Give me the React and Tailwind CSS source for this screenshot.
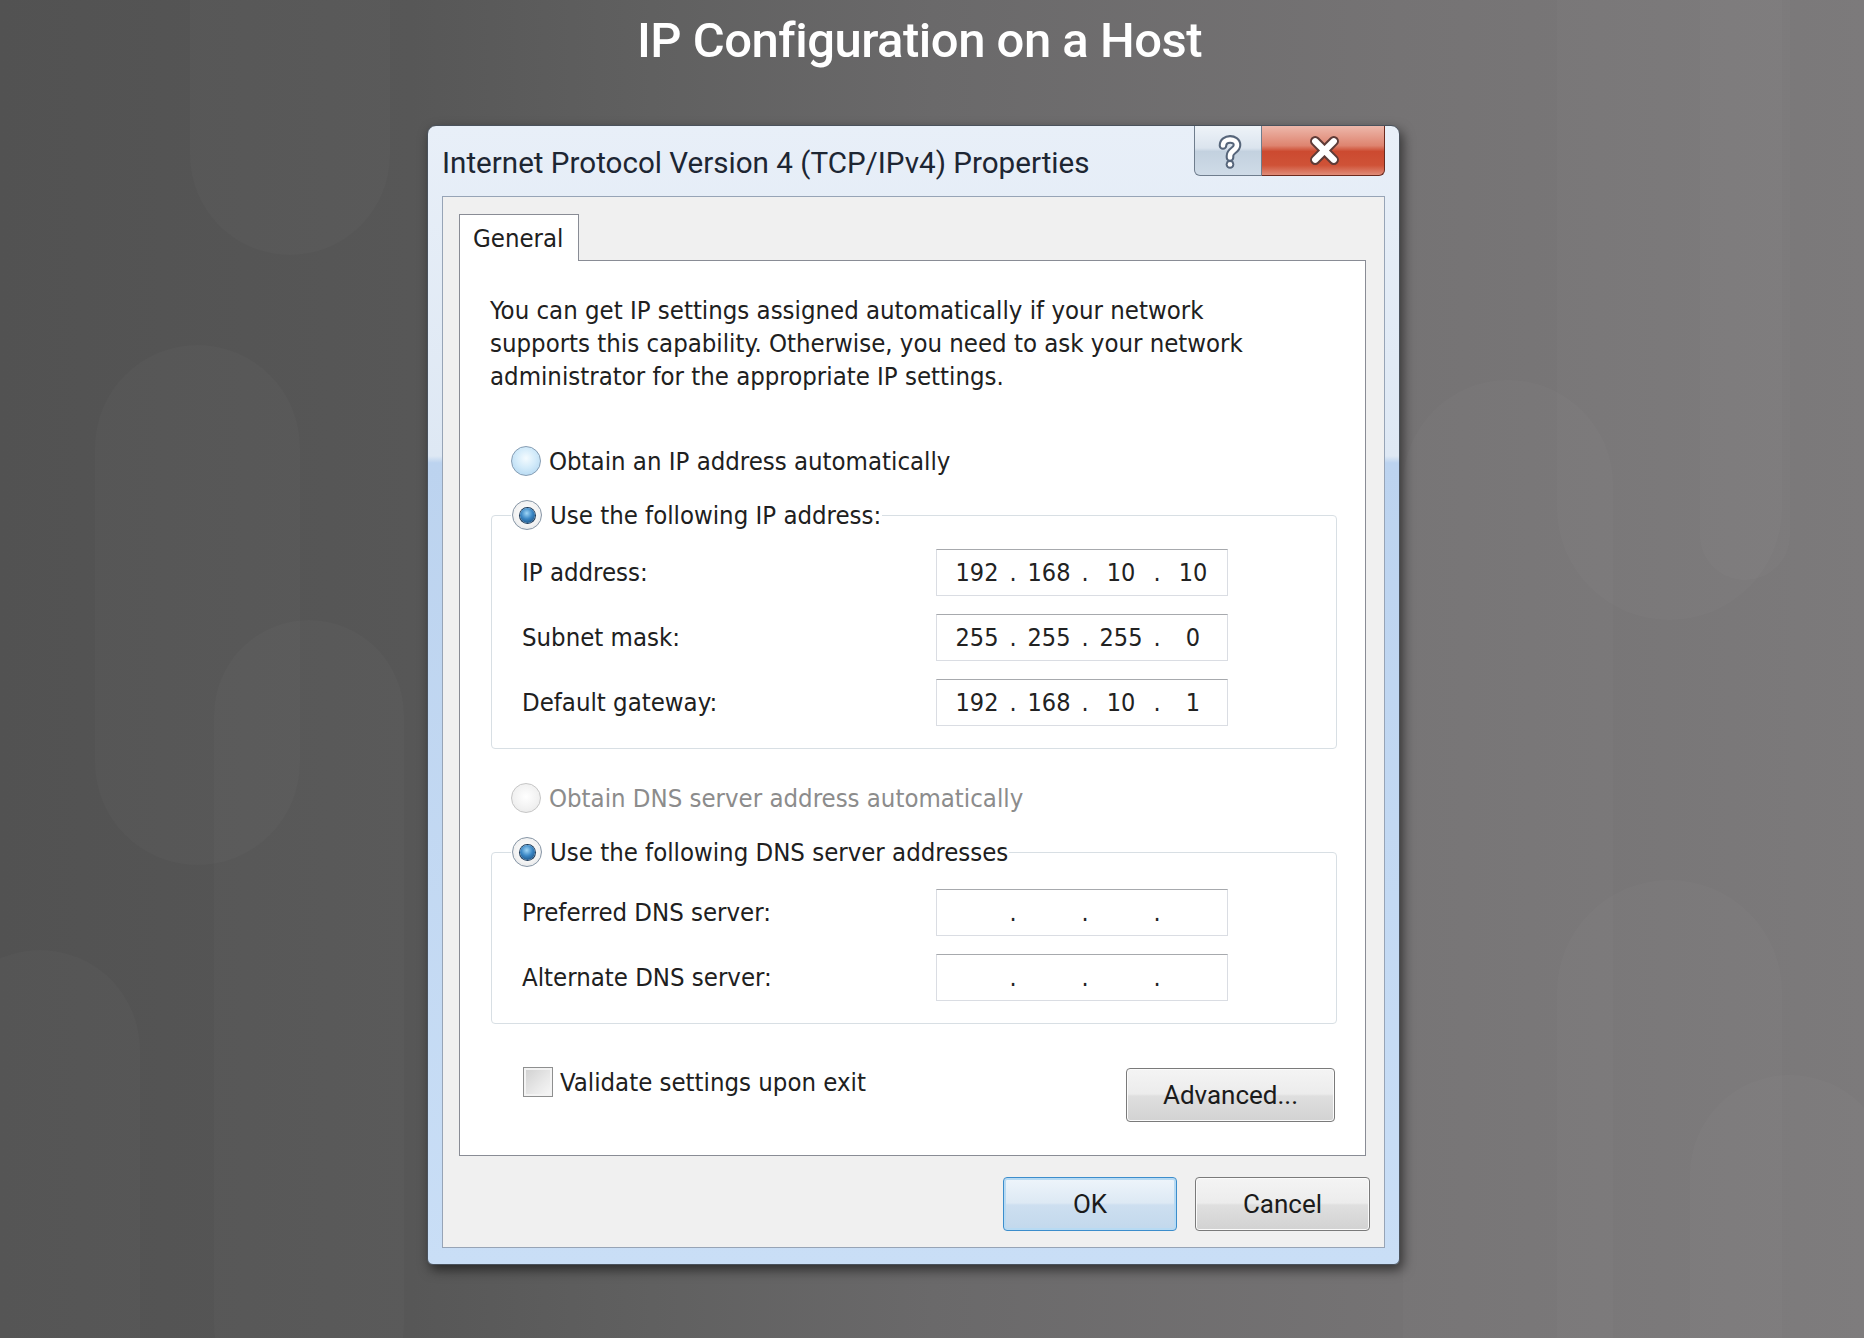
import React from 'react';

// fonts used across the dialog
const dlgFont = "font-['DejaVu_Sans_Condensed','DejaVu_Sans',sans-serif]";
const uiFont = "font-['Roboto','Liberation_Sans',sans-serif]";

const blobs = [
  'left-[190px] top-[-200px] h-[455px] w-[200px]',
  'left-[95px] top-[345px] h-[520px] w-[205px]',
  'left-[214px] top-[620px] h-[800px] w-[190px]',
  'left-[-60px] top-[950px] h-[500px] w-[200px]',
  'left-[1403px] top-[380px] h-[1100px] w-[210px]',
  'left-[1557px] top-[-150px] h-[770px] w-[225px]',
  'left-[1700px] top-[-120px] h-[700px] w-[90px]',
  'left-[1557px] top-[880px] h-[600px] w-[225px]',
  'left-[1690px] top-[1075px] h-[400px] w-[200px]',
];

const Radio = ({ checked = false, disabled = false }) => (
  <span
    className={`flex h-[30px] w-[30px] shrink-0 items-center justify-center rounded-full border ${
      disabled
        ? 'border-[#c6c6c6] bg-[radial-gradient(circle_at_50%_45%,#ffffff_0%,#f1f1f1_60%,#e2e2e2_100%)]'
        : checked
        ? 'border-[#8796a6] bg-[radial-gradient(circle_at_50%_45%,#ffffff_0%,#f2f2f2_60%,#d5dbe1_100%)]'
        : 'border-[#869db3] bg-[radial-gradient(circle_at_50%_40%,#f4fbff_0%,#d3ebfa_45%,#a9d1ee_100%)]'
    }`}
  >
    {checked && (
      <span className="h-[15px] w-[15px] rounded-full bg-[radial-gradient(circle_at_45%_35%,#9fd6f7_0%,#3a86c4_45%,#123f6b_100%)] shadow-[0_0_0_1px_#1d3b5a]" />
    )}
  </span>
);

const IpField = ({ octets }) => (
  <div className={`flex h-[47px] w-[292px] items-center border border-[#dadde3] border-t-[#a7a9ad] bg-white pl-[8px] text-[25px] text-[#222] ${dlgFont}`}>
    {[0, 1, 2, 3].map((i) => (
      <React.Fragment key={i}>
        <span className="w-[64px] text-center">{octets ? octets[i] : ''}</span>
        {i < 3 && <span className="w-[8px] text-center">.</span>}
      </React.Fragment>
    ))}
  </div>
);

const Button = ({ children, primary = false, className = '' }) => (
  <button
    className={`flex h-[54px] items-center justify-center rounded-[4px] border text-[26px] text-[#1b1b1b] ${uiFont} ${
      primary
        ? 'border-[#3c8dcc] bg-[linear-gradient(180deg,#eef5fb_0%,#dde9f4_48%,#cddff0_52%,#c2d8ec_100%)] shadow-[inset_0_0_0_2px_#b7daf3]'
        : 'border-[#7a7a7a] bg-[linear-gradient(180deg,#f4f4f4_0%,#ececec_48%,#dfdfdf_52%,#d2d2d2_100%)] shadow-[inset_0_0_0_1px_#fbfbfb]'
    } ${className}`}
  >
    {children}
  </button>
);

const HelpGlyph = () => (
  <svg width="28" height="38" viewBox="0 0 26 34" fill="none">
    <path d="M6.5 11 C6.5 3.5 19.5 3.5 19.5 10.5 C19.5 15.5 13 15.5 13 20.5 L13 22" stroke="#56657a" strokeWidth="8" strokeLinecap="round" />
    <circle cx="13" cy="28.5" r="4" fill="#56657a" />
    <path d="M6.5 11 C6.5 3.5 19.5 3.5 19.5 10.5 C19.5 15.5 13 15.5 13 20.5 L13 22" stroke="#ffffff" strokeWidth="4.2" strokeLinecap="round" />
    <circle cx="13" cy="28.5" r="2.2" fill="#ffffff" />
  </svg>
);

const CloseGlyph = () => (
  <svg width="31" height="31" viewBox="0 0 30 30" fill="none">
    <path d="M6 6 L24 24 M24 6 L6 24" stroke="#5e3b37" strokeWidth="10" strokeLinecap="round" />
    <path d="M6 6 L24 24 M24 6 L6 24" stroke="#ffffff" strokeWidth="6" strokeLinecap="round" />
  </svg>
);

const GroupBox = ({ legend, rows, top = 'mt-[17px]' }) => (
  <fieldset className="ml-px w-[846px] rounded-[4px] border border-[#d8dfe4] pb-[22px]">
    <legend className="ml-[19px] flex h-[34px] items-center gap-[8px] px-[1px]">
      <Radio checked />
      <span>{legend}</span>
    </legend>
    <div className={`grid grid-cols-[414px_292px] items-center gap-y-[18px] pl-[30px] ${top}`}>
      {rows.map(([label, octets]) => (
        <React.Fragment key={label}>
          <span>{label}</span>
          <IpField octets={octets} />
        </React.Fragment>
      ))}
    </div>
  </fieldset>
);

export default function App() {
  return (
    <div className="relative min-h-[1338px] w-full overflow-hidden bg-[linear-gradient(90deg,#525252_0%,#575757_22%,#606060_35%,#6a696a_50%,#757374_75%,#7c7a7b_100%)]">
      {blobs.map((b) => (
        <div key={b} className={`absolute rounded-full bg-white/[0.02] ${b}`} />
      ))}

      <div className="relative ml-[427px] flex w-[973px] flex-col">
        <h1 className="pl-[12px] pt-[16px] text-center font-['Roboto','Liberation_Sans',sans-serif] text-[49px] font-medium leading-none tracking-[-0.5px] text-white">
          IP Configuration on a Host
        </h1>

        {/* dialog window */}
        <div className="mt-[60px] flex h-[1140px] w-[973px] flex-col rounded-b-[6px] rounded-t-[9px] border border-[#4a525c] bg-[linear-gradient(180deg,#e8eff8_0%,#dee8f4_29%,#bcd3ef_29.6%,#c9def6_100%)] px-[14px] shadow-[3px_5px_12px_rgba(0,0,0,0.55)]">
          {/* title bar */}
          <div className="flex h-[70px] items-start justify-between">
            <div className={`pt-[23px] text-[29.6px] leading-none text-[#1d2633] ${uiFont}`}>
              Internet Protocol Version 4 (TCP/IPv4) Properties
            </div>
            <div className="flex">
              <div className="flex h-[50px] w-[68px] items-center justify-center rounded-bl-[6px] border border-t-0 border-[#6f7d8d] bg-[linear-gradient(180deg,#eef3f8_0%,#dbe4ee_45%,#c3d1df_52%,#cfdbe7_100%)] pl-[4px] pt-[2px]">
                <HelpGlyph />
              </div>
              <div className="flex h-[50px] w-[123px] items-center justify-center rounded-br-[6px] border border-l-0 border-t-0 border-[#6b2a1e] bg-[linear-gradient(180deg,#edb8ab_0%,#de8470_40%,#cc4a30_52%,#cf5237_80%,#e08c78_100%)] pl-[3px]">
                <CloseGlyph />
              </div>
            </div>
          </div>

          {/* client area */}
          <div className={`flex h-[1052px] flex-col border border-[#97a4b6] bg-[#f0f0f0] pl-[16px] pr-[18px] pt-[17px] text-[25.5px] text-[#202020] ${dlgFont}`}>
            <div className="flex">
              <div className="relative z-10 -mb-px flex h-[47px] w-[120px] items-center border border-b-0 border-[#898c95] bg-white pl-[13px]">
                General
              </div>
            </div>
            <div className="flex h-[896px] w-[907px] flex-col border border-[#898c95] bg-white pl-[30px] pr-[28px] pt-[33px]">
              <p className="leading-[33px]">
                You can get IP settings assigned automatically if your network
                <br />
                supports this capability. Otherwise, you need to ask your network
                <br />
                administrator for the appropriate IP settings.
              </p>

              <div className="ml-[21px] mt-[51px] flex h-[34px] items-center gap-[8px]">
                <Radio />
                <span>Obtain an IP address automatically</span>
              </div>

              <div className="mt-[20px]">
                <GroupBox
                  legend="Use the following IP address:"
                  rows={[
                    ['IP address:', ['192', '168', '10', '10']],
                    ['Subnet mask:', ['255', '255', '255', '0']],
                    ['Default gateway:', ['192', '168', '10', '1']],
                  ]}
                />
              </div>

              <div className="ml-[21px] mt-[32px] flex h-[34px] items-center gap-[8px] text-[#8c8c8c]">
                <Radio disabled />
                <span>Obtain DNS server address automatically</span>
              </div>

              <div className="mt-[20px]">
                <GroupBox
                  top="mt-[20px]"
                  legend="Use the following DNS server addresses"
                  rows={[
                    ['Preferred DNS server:', null],
                    ['Alternate DNS server:', null],
                  ]}
                />
              </div>

              <div className="mt-[38px] flex items-start justify-between">
                <div className="ml-[33px] flex items-center gap-[7px] pt-px">
                  <span className="h-[30px] w-[30px] border border-[#8e8f8f] bg-[linear-gradient(135deg,#cfcfcf_0%,#e9e9e9_60%,#f8f8f8_100%)] shadow-[inset_0_0_0_2px_#f3f3f3]" />
                  <span>Validate settings upon exit</span>
                </div>
                <Button className="mr-[2px] mt-[6px] w-[209px]">Advanced...</Button>
              </div>
            </div>

            <div className="-mr-[4px] mt-[21px] flex justify-end gap-[18px]">
              <Button primary className="w-[174px]">
                OK
              </Button>
              <Button className="w-[175px]">Cancel</Button>
            </div>
          </div>
        </div>
      </div>
    </div>
  );
}
